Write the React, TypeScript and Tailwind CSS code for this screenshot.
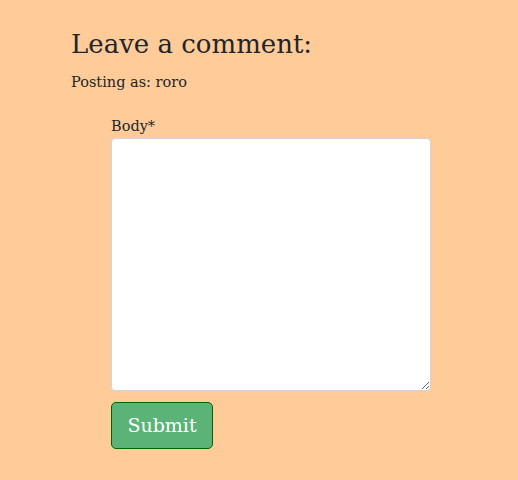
import React from 'react'

const App = () => {
  return (
    <div className="min-h-[480px] w-full bg-[#ffcc99] text-[#212529] font-['DejaVu_Serif',serif]">
      <div className="px-[71px] pt-[26px]">
        <h3 className="text-[26px] leading-[36px] mb-[8px]">Leave a comment:</h3>
        <p className="text-[14.5px] leading-[24px]">Posting as: roro</p>

        <form className="pl-[40px] pt-[20px]">
          <label className="block text-[14.5px] leading-[24px]">Body*</label>
          <textarea className="block w-[320px] h-[253px] bg-white border border-[#ced4da] rounded-[4px] resize-y outline-none" />
          <button
            type="button"
            className="mt-[11px] w-[102px] h-[47px] bg-[#5cb377] border border-[#006400] rounded-[5px] text-white text-[19px]"
          >
            Submit
          </button>
        </form>
      </div>
    </div>
  )
}

export default App
